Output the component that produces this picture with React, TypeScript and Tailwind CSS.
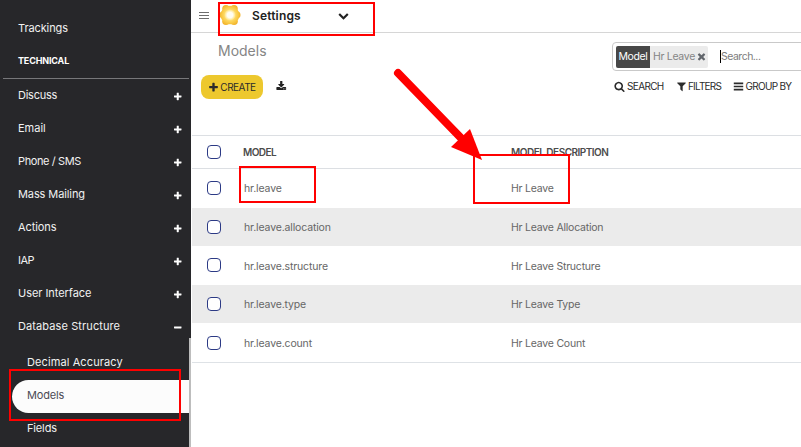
import type { ReactNode } from 'react';

const icons = {
  plus: 'M1600 736v192q0 40-28 68t-68 28h-416v416q0 40-28 68t-68 28h-192q-40 0-68-28t-28-68v-416h-416q-40 0-68-28t-28-68v-192q0-40 28-68t68-28h416v-416q0-40 28-68t68-28h192q40 0 68 28t28 68v416h416q40 0 68 28t28 68z',
  minus: 'M1600 736v192q0 40-28 68t-68 28h-1216q-40 0-68-28t-28-68v-192q0-40 28-68t68-28h1216q40 0 68 28t28 68z',
  search:
    'M1216 832q0-185-131.5-316.5t-316.5-131.5-316.5 131.5-131.5 316.5 131.5 316.5 316.5 131.5 316.5-131.5 131.5-316.5zm512 832q0 52-38 90t-90 38q-54 0-90-38l-343-342q-179 124-399 124-143 0-273.5-55.5t-225-150-150-225-55.5-273.5 55.5-273.5 150-225 225-150 273.5-55.5 273.5 55.5 225 150 150 225 55.5 273.5q0 220-124 399l343 343q37 37 37 90z',
  filter:
    'M1595 295q17 41-14 70l-493 493v742q0 42-39 59-13 5-25 5-27 0-45-19l-256-256q-19-19-19-45v-486l-493-493q-31-29-14-70 17-39 59-39h1280q42 0 59 39z',
  bars: 'M128 256h1536v256h-1536zM128 768h1536v256h-1536zM128 1280h1536v256h-1536z',
  times:
    'M1490 1322q0 40-28 68l-136 136q-28 28-68 28t-68-28l-294-294-294 294q-28 28-68 28t-68-28l-136-136q-28-28-28-68t28-68l294-294-294-294q-28-28-28-68t28-68l136-136q28-28 68-28t68 28l294 294 294-294q28-28 68-28t68 28l136 136q28 28 28 68t-28 68l-294 294 294 294q28 28 28 68z',
  download:
    'M1344 1344q0-26-19-45t-45-19-45 19-19 45 19 45 45 19 45-19 19-45zm256 0q0-26-19-45t-45-19-45 19-19 45 19 45 45 19 45-19 19-45zm128-224v320q0 40-28 68t-68 28h-1472q-40 0-68-28t-28-68v-320q0-40 28-68t68-28h465l135 136q58 56 136 56t136-56l136-136h464q40 0 68 28t28 68zm-325-569q17 41-14 70l-448 448q-18 19-45 19t-45-19l-448-448q-31-29-14-70 17-39 59-39h256v-448q0-26 19-45t45-19h256q26 0 45 19t19 45v448h256q42 0 59 39z',
  chevron:
    'M1683 808l-742 741q-19 19-45 19t-45-19l-742-741q-19-19-19-45.5t19-45.5l166-165q19-19 45-19t45 19l531 531 531-531q19-19 45-19t45 19l166 165q19 19 19 45.5t-19 45.5z',
};

function Icon({ name, className }: { name: keyof typeof icons; className: string }) {
  return (
    <svg viewBox="0 0 1792 1792" fill="currentColor" className={`shrink-0 ${className}`}>
      <path d={icons[name]} />
    </svg>
  );
}

const menu = [
  { label: 'Discuss', track: 'tracking-[-0.25px]' },
  { label: 'Email', track: 'tracking-[0px]' },
  { label: 'Phone / SMS', track: 'tracking-[-0.4px]' },
  { label: 'Mass Mailing', track: 'tracking-[-0.1px]' },
  { label: 'Actions', track: 'tracking-[-0.1px]' },
  { label: 'IAP', track: 'tracking-[-0.5px]' },
  { label: 'User Interface', track: 'tracking-[-0.05px]' },
  { label: 'Database Structure', track: 'tracking-[0.1px]', open: true },
];

function Sidebar() {
  return (
    <aside className="h-[447px] w-[191px] shrink-0 overflow-hidden bg-[#27272a] text-[11px] text-[#f1f1f1]">
      <div className="mt-3 flex h-[33px] items-center pl-[18px] tracking-[-0.1px]">Trackings</div>
      <div className="ml-[3px] mr-[2px] flex h-[34px] items-center border-b border-[#77777a] pb-px pl-[15px] text-[9px] font-bold tracking-[-0.15px] text-white">
        TECHNICAL
      </div>
      {menu.map((m) => (
        <div key={m.label} className="flex h-[33px] items-center justify-between pl-[18px] pr-[9px]">
          <span className={m.track}>{m.label}</span>
          <Icon name={m.open ? 'minus' : 'plus'} className="mt-[3px] size-[9.5px] text-white" />
        </div>
      ))}
      <div className="flex pt-[4px]">
        <div className="w-[189px]">
          <div className="flex h-[33px] items-center pb-[2px] pl-[27px] tracking-[0.1px]">Decimal Accuracy</div>
          <div className="ml-3 flex h-[33px] items-center rounded-l-full bg-[#fcfcfc] pb-[2px] pl-[15px] tracking-[-0.15px] text-[#4b4b55]">
            Models
          </div>
          <div className="flex h-[33px] items-center pb-[2px] pl-[27px] tracking-[-0.15px]">Fields</div>
        </div>
        <div className="-mt-[9px] h-[120px] w-[2px] bg-[#bdbdbd]" />
      </div>
    </aside>
  );
}

function Flower() {
  return (
    <svg viewBox="0 0 24 24" className="size-[24px] shrink-0">
      <defs>
        <radialGradient id="petal" gradientUnits="userSpaceOnUse" cx="12" cy="12" r="11">
          <stop offset="0.35" stopColor="#ffe27a" />
          <stop offset="0.75" stopColor="#f9c943" />
          <stop offset="1" stopColor="#f1b02a" />
        </radialGradient>
        <radialGradient id="core">
          <stop offset="0.5" stopColor="#fffdf2" />
          <stop offset="1" stopColor="#ffdf72" />
        </radialGradient>
      </defs>
      <g fill="url(#petal)">
        <circle cx="12" cy="12" r="9.3" />
        <circle cx="4.9" cy="12" r="3.4" />
        <circle cx="19.1" cy="12" r="3.4" />
        <circle cx="8" cy="5.7" r="3.8" />
        <circle cx="16" cy="5.7" r="3.8" />
        <circle cx="8" cy="18.3" r="3.8" />
        <circle cx="16" cy="18.3" r="3.8" />
      </g>
      <circle cx="12" cy="12" r="5.6" fill="url(#core)" />
    </svg>
  );
}

function SearchTool({ icon, children, className }: { icon: keyof typeof icons; children: ReactNode; className: string }) {
  return (
    <div className={`flex shrink-0 items-center whitespace-nowrap ${className}`}>
      <Icon name={icon} className="size-[11px]" />
      {children}
    </div>
  );
}

const rows = [
  ['hr.leave', 'Hr Leave'],
  ['hr.leave.allocation', 'Hr Leave Allocation'],
  ['hr.leave.structure', 'Hr Leave Structure'],
  ['hr.leave.type', 'Hr Leave Type'],
  ['hr.leave.count', 'Hr Leave Count'],
];

function Checkbox() {
  return <span className="size-[14px] shrink-0 rounded-[4px] border-[1.5px] border-[#2c3a85] bg-white" />;
}

function Content() {
  return (
    <main className="h-[447px] min-w-0 flex-1 overflow-hidden bg-white">
      <header className="flex h-[33px] items-center border-b border-[#d6d6d6] pb-[2px] pl-[8px]">
        <div className="flex w-[10px] flex-col gap-[2px]">
          <span className="h-[1px] bg-[#6d6d6d]" />
          <span className="h-[1px] bg-[#6d6d6d]" />
          <span className="h-[1px] bg-[#6d6d6d]" />
        </div>
        <span className="ml-[9px]">
          <Flower />
        </span>
        <span className="ml-[10px] w-[86px] pt-px text-[12px] font-semibold tracking-[0.15px] text-[#222]">Settings</span>
        <Icon name="chevron" className="size-[11px] text-[#222]" />
      </header>

      <div className="flex h-[102px]">
        <div className="w-[421px] shrink-0">
          <h1 className="ml-[27px] mt-[8px] text-[14px] leading-[20px] text-[#858585]">Models</h1>
          <div className="mt-[14px] flex items-center pl-[10px]">
            <button className="flex h-[24px] w-[62px] items-center justify-center gap-[1px] rounded-[8px] bg-[#edc82e] text-[10px] tracking-[-0.5px] text-[#2b2b2b]">
              <Icon name="plus" className="size-[11px]" />
              CREATE
            </button>
            <Icon name="download" className="mb-px ml-[13px] size-[10.5px] text-[#222]" />
          </div>
        </div>
        <div className="min-w-0 flex-1 overflow-hidden">
          <div className="mt-[9px] flex h-[29px] w-[220px] items-center rounded-[4px] border border-[#c9c9c9] pl-[3px]">
            <div className="flex h-[22px] w-[92px] items-center overflow-hidden rounded-[2px] bg-[#ebebeb] text-[10.5px]">
              <span className="flex h-full w-[34px] items-center justify-center bg-[#474747] tracking-[-0.35px] text-white">Model</span>
              <span className="w-[46px] whitespace-nowrap pl-[3px] tracking-[-0.3px] text-[#858585]">Hr Leave</span>
              <Icon name="times" className="size-[11px] text-[#62666c]" />
            </div>
            <span className="ml-[12px] h-[13px] w-px bg-black" />
            <span className="text-[10.5px] tracking-[-0.5px] text-[#7d7d7d]">Search...</span>
          </div>
          <div className="mt-[8px] flex pl-[2px] text-[10px] leading-[15px] text-[#2b2b2b]">
            <SearchTool icon="search" className="w-[62px] gap-[2px] tracking-[-0.65px]">SEARCH</SearchTool>
            <SearchTool icon="filter" className="w-[56.5px] gap-[1px] tracking-[-0.8px]">FILTERS</SearchTool>
            <SearchTool icon="bars" className="gap-[2px] tracking-[-0.7px]">GROUP BY</SearchTool>
          </div>
        </div>
      </div>

      <section className="ml-px border-b border-[#dee2e6] text-[10.5px] tracking-[-0.15px] text-[#666]">
        <div className="flex h-[34px] items-center border-y border-[#dcdfe3] pl-[15px] text-[10px] font-semibold text-[#4c4c4c]">
          <Checkbox />
          <span className="ml-[22px] w-[268px] tracking-[-0.55px]">MODEL</span>
          <span className="tracking-[-0.5px]">MODEL DESCRIPTION</span>
        </div>
        {rows.map(([model, description]) => (
          <div key={model} className="flex h-[38.6px] items-center pl-[15px] odd:bg-[#ebebeb]">
            <Checkbox />
            <span className="ml-[23px] w-[267px] pt-[2px]">{model}</span>
            <span className="pt-[2px] tracking-[-0.22px]">{description}</span>
          </div>
        ))}
      </section>
    </main>
  );
}

function Annotations() {
  return (
    <div className="pointer-events-none absolute inset-0">
      <div className="absolute left-[218px] top-[2px] h-[34px] w-[157px] border-2 border-[#f00]" />
      <div className="absolute left-[239px] top-[166px] h-[37px] w-[77px] border-2 border-[#f00]" />
      <div className="absolute left-[473px] top-[154px] h-[50px] w-[97px] border-2 border-[#f00]" />
      <div className="absolute left-[9px] top-[369px] h-[52px] w-[172px] border-2 border-[#f00]" />
      <svg viewBox="0 0 801 447" className="absolute left-0 top-0 h-[447px] w-[801px]">
        <path d="M398 73L461 138" stroke="#f00" strokeWidth="8" strokeLinecap="round" />
        <path d="M482 160L470 129L451 147Z" fill="#f00" />
      </svg>
    </div>
  );
}

export default function App() {
  return (
    <div className="relative flex h-[447px] w-[801px] overflow-hidden bg-white font-['Inter','Liberation_Sans',sans-serif]">
      <Sidebar />
      <Content />
      <Annotations />
    </div>
  );
}
